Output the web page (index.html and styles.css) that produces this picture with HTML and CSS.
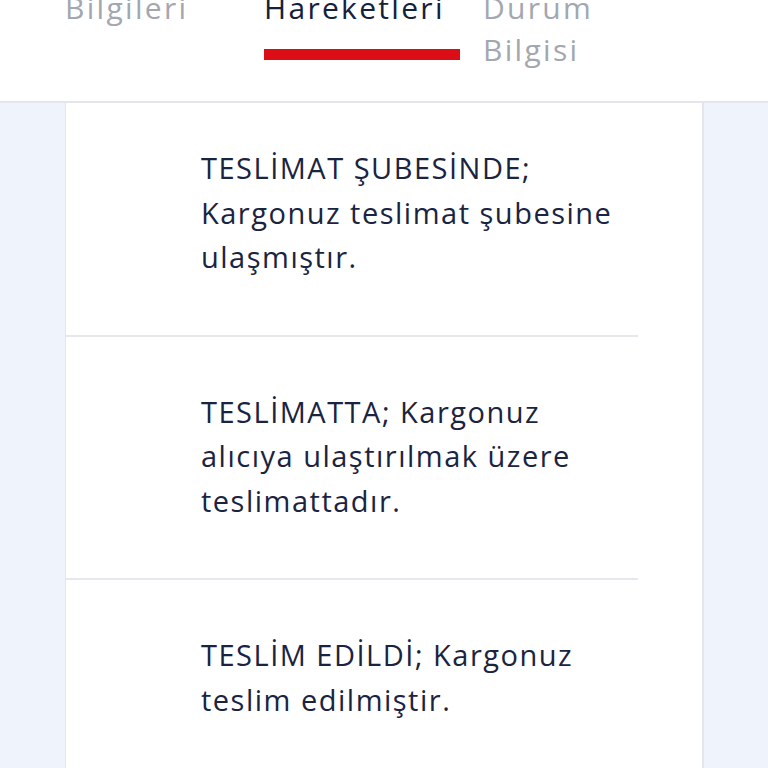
FILE: index.html
```html
<!DOCTYPE html>
<html lang="tr">
<head>
  <meta charset="UTF-8" />
  <meta name="viewport" content="width=device-width, initial-scale=1.0" />
  <title>Gönderi Hareketleri</title>
  <link rel="stylesheet" href="styles.css">
</head>
<body>
  <header class="tabs">
    <div class="tab tab-info">Bilgileri</div>
    <div class="tab tab-moves active">
      <span>Hareketleri</span>
      <div class="tab-bar"></div>
    </div>
    <div class="tab tab-status">Durum<br>Bilgisi</div>
  </header>

  <div class="list">
    <div class="row">
      <p class="row-text">TESLİMAT ŞUBESİNDE; Kargonuz teslimat şubesine ulaşmıştır.</p>
    </div>
    <div class="row">
      <p class="row-text">TESLİMATTA; Kargonuz alıcıya ulaştırılmak üzere teslimattadır.</p>
    </div>
    <div class="row">
      <p class="row-text">TESLİM EDİLDİ; Kargonuz teslim edilmiştir.</p>
    </div>
  </div>
</body>
</html>
```

FILE: styles.css
```css
* {
  margin: 0;
  padding: 0;
  box-sizing: border-box;
}
body {
  background: #eff3fb;
  font-family: "Open Sans", "Noto Sans", sans-serif;
  color: #1a2441;
  overflow: hidden;
}
.tabs {
  position: relative;
  z-index: 2;
  display: flex;
  gap: 23px;
  margin-top: -13px;
  padding: 0 0 30px 65px;
  background: #ffffff;
  border-bottom: 2px solid #e4e6eb;
}
.tab {
  font-size: 30px;
  line-height: 42px;
  letter-spacing: 2.3px;
  color: #a3a7b0;
}
.tab-info {
  width: 176px;
}
.tab-moves {
  width: 196px;
}
.tab.active {
  color: #14213d;
  font-weight: 500;
}
.tab-bar {
  height: 11px;
  margin-top: 20px;
  background: #db0d17;
}
.list {
  margin: -10px 64px 0 65px;
  background: #ffffff;
  border-left: 1px solid #e2e5eb;
  border-right: 2px solid #e2e5eb;
  min-height: 700px;
}
.row {
  margin-right: 64px;
  padding: 53px 0 55px 135px;
  border-bottom: 2px solid #e6e8ec;
}
.row:last-child {
  border-bottom: none;
}
.row-text {
  font-size: 29px;
  line-height: 44.5px;
  letter-spacing: 1.5px;
}
```
